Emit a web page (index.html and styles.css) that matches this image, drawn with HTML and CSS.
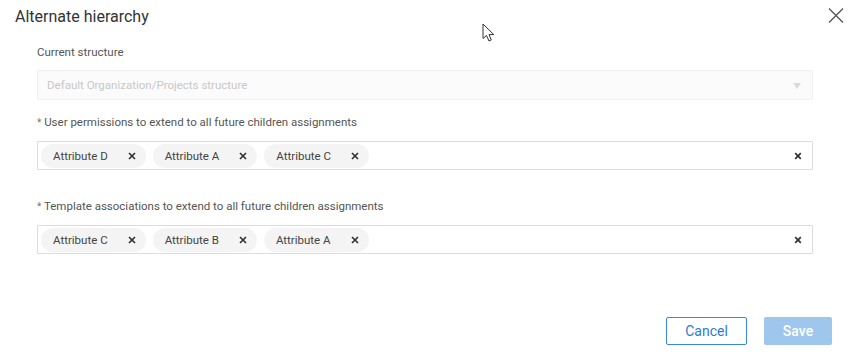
FILE: index.html
```html
<!DOCTYPE html>
<html lang="en">
<head>
    <meta charset="UTF-8">
    <title>Alternate hierarchy</title>
    <link rel="stylesheet" href="styles.css">
</head>
<body>
    <div class="dialog">
        <div class="dialog-header">
            <h2 class="dialog-title">Alternate hierarchy</h2>
            <button class="close-btn" aria-label="Close">
                <svg width="16" height="15" viewBox="0 0 16 15"><path d="M1 0.5L15 14.5M15 0.5L1 14.5" stroke="#555" stroke-width="1.3" fill="none"/></svg>
            </button>
        </div>

        <div class="dialog-body">
            <div class="field">
                <label class="field-label">Current structure</label>
                <div class="select disabled">
                    <span class="select-text">Default Organization/Projects structure</span>
                    <span class="select-arrow"></span>
                </div>
            </div>

            <div class="field field-perms">
                <label class="field-label"><span class="req">*</span> User permissions to extend to all future children assignments</label>
                <div class="tag-box">
                    <span class="tag">Attribute D <svg class="x-icon" width="8" height="8" viewBox="0 0 8 8"><path d="M1 1L7 7M7 1L1 7"/></svg></span>
                    <span class="tag">Attribute A <svg class="x-icon" width="8" height="8" viewBox="0 0 8 8"><path d="M1 1L7 7M7 1L1 7"/></svg></span>
                    <span class="tag">Attribute C <svg class="x-icon" width="8" height="8" viewBox="0 0 8 8"><path d="M1 1L7 7M7 1L1 7"/></svg></span>
                    <svg class="x-icon clear-x" width="8" height="8" viewBox="0 0 8 8"><path d="M1.2 1.2L6.8 6.8M6.8 1.2L1.2 6.8"/></svg>
                </div>
            </div>

            <div class="field field-templates">
                <label class="field-label"><span class="req">*</span> Template associations to extend to all future children assignments</label>
                <div class="tag-box">
                    <span class="tag">Attribute C <svg class="x-icon" width="8" height="8" viewBox="0 0 8 8"><path d="M1 1L7 7M7 1L1 7"/></svg></span>
                    <span class="tag">Attribute B <svg class="x-icon" width="8" height="8" viewBox="0 0 8 8"><path d="M1 1L7 7M7 1L1 7"/></svg></span>
                    <span class="tag">Attribute A <svg class="x-icon" width="8" height="8" viewBox="0 0 8 8"><path d="M1 1L7 7M7 1L1 7"/></svg></span>
                    <svg class="x-icon clear-x" width="8" height="8" viewBox="0 0 8 8"><path d="M1.2 1.2L6.8 6.8M6.8 1.2L1.2 6.8"/></svg>
                </div>
            </div>
        </div>

        <div class="dialog-footer">
            <button class="btn btn-outline">Cancel</button>
            <button class="btn btn-primary" disabled>Save</button>
        </div>

        <!-- mouse pointer captured in the screenshot -->
        <svg class="cursor" width="14" height="20" viewBox="0 0 14 20">
            <path d="M1 1 L1 15.5 L4.5 12.5 L7 18 L9.3 17 L7 11.6 L11.8 11.6 Z" fill="#fff" stroke="#333" stroke-width="1" stroke-linejoin="round"/>
        </svg>
    </div>
</body>
</html>
```

FILE: styles.css
```css
:root {
    --text-color: #333333;
    --label-color: #555555;
    --muted-color: #c8c8c8;
    --border-color: #dcdcdc;
    --tag-bg: #f4f4f4;
    --primary-color: #3a86d8;
    --primary-disabled: #9fc6ec;
}

* { box-sizing: border-box; }

body {
    margin: 0;
    font-family: Roboto, "Liberation Sans", sans-serif;
    background: #ffffff;
    color: var(--text-color);
}

.dialog {
    position: relative;
    width: 850px;
    height: 364px;
    display: flex;
    flex-direction: column;
}

.dialog-header {
    display: flex;
    justify-content: space-between;
    align-items: flex-start;
    padding: 7px 6px 0 15px;
}

.dialog-title {
    margin: 0;
    font-size: 16px;
    font-weight: 400;
    line-height: 20px;
    color: #333;
}

.close-btn {
    background: none;
    border: none;
    padding: 0;
    margin-top: 1px;
    width: 16px;
    height: 15px;
    cursor: pointer;
}
.close-btn svg { display: block; }

.dialog-body {
    flex: 1;
    padding: 17px 37px 0 37px;
}

.field { display: flex; flex-direction: column; }
.field-perms { margin-top: 14px; }
.field-templates { margin-top: 28px; }

.field-label {
    font-size: 11.5px;
    line-height: 16px;
    color: var(--label-color);
    margin-bottom: 10px;
}
.req { color: #777; font-size: 10px; }

.select {
    height: 30px;
    border: 1px solid #f0f0f0;
    background: #fbfbfb;
    border-radius: 2px;
    display: flex;
    align-items: center;
    justify-content: space-between;
    padding: 0 11px 0 9px;
    font-size: 11.5px;
}
.select-text { color: var(--muted-color); }
.select-arrow {
    width: 0;
    height: 0;
    border-left: 4px solid transparent;
    border-right: 4px solid transparent;
    border-top: 6px solid #dadada;
    margin-top: 1px;
}

.tag-box {
    height: 29px;
    border: 1px solid var(--border-color);
    border-radius: 1px;
    display: flex;
    align-items: center;
    gap: 7px;
    padding: 0 10px 0 3px;
}

.tag {
    display: flex;
    align-items: center;
    gap: 20px;
    height: 24px;
    padding: 0 10px 0 12px;
    border-radius: 12px;
    background: var(--tag-bg);
    font-size: 11.5px;
    color: #444;
}

.x-icon {
    display: block;
    fill: none;
    stroke: #333;
    stroke-width: 1.7;
}

.clear-x { margin-left: auto; }

.dialog-footer {
    display: flex;
    justify-content: flex-end;
    gap: 17px;
    padding: 0 18px 19px 0;
}

.btn {
    height: 28px;
    font-family: Roboto, "Liberation Sans", sans-serif;
    font-size: 14px;
    border-radius: 2px;
    cursor: pointer;
}
.btn-outline {
    width: 81px;
    background: #fff;
    border: 1px solid var(--primary-color);
    color: #2f7ad0;
}
.btn-primary {
    width: 68px;
    background: var(--primary-disabled);
    border: none;
    color: #fff;
    font-weight: 500;
}

.cursor {
    position: absolute;
    left: 482px;
    top: 23px;
}
```
